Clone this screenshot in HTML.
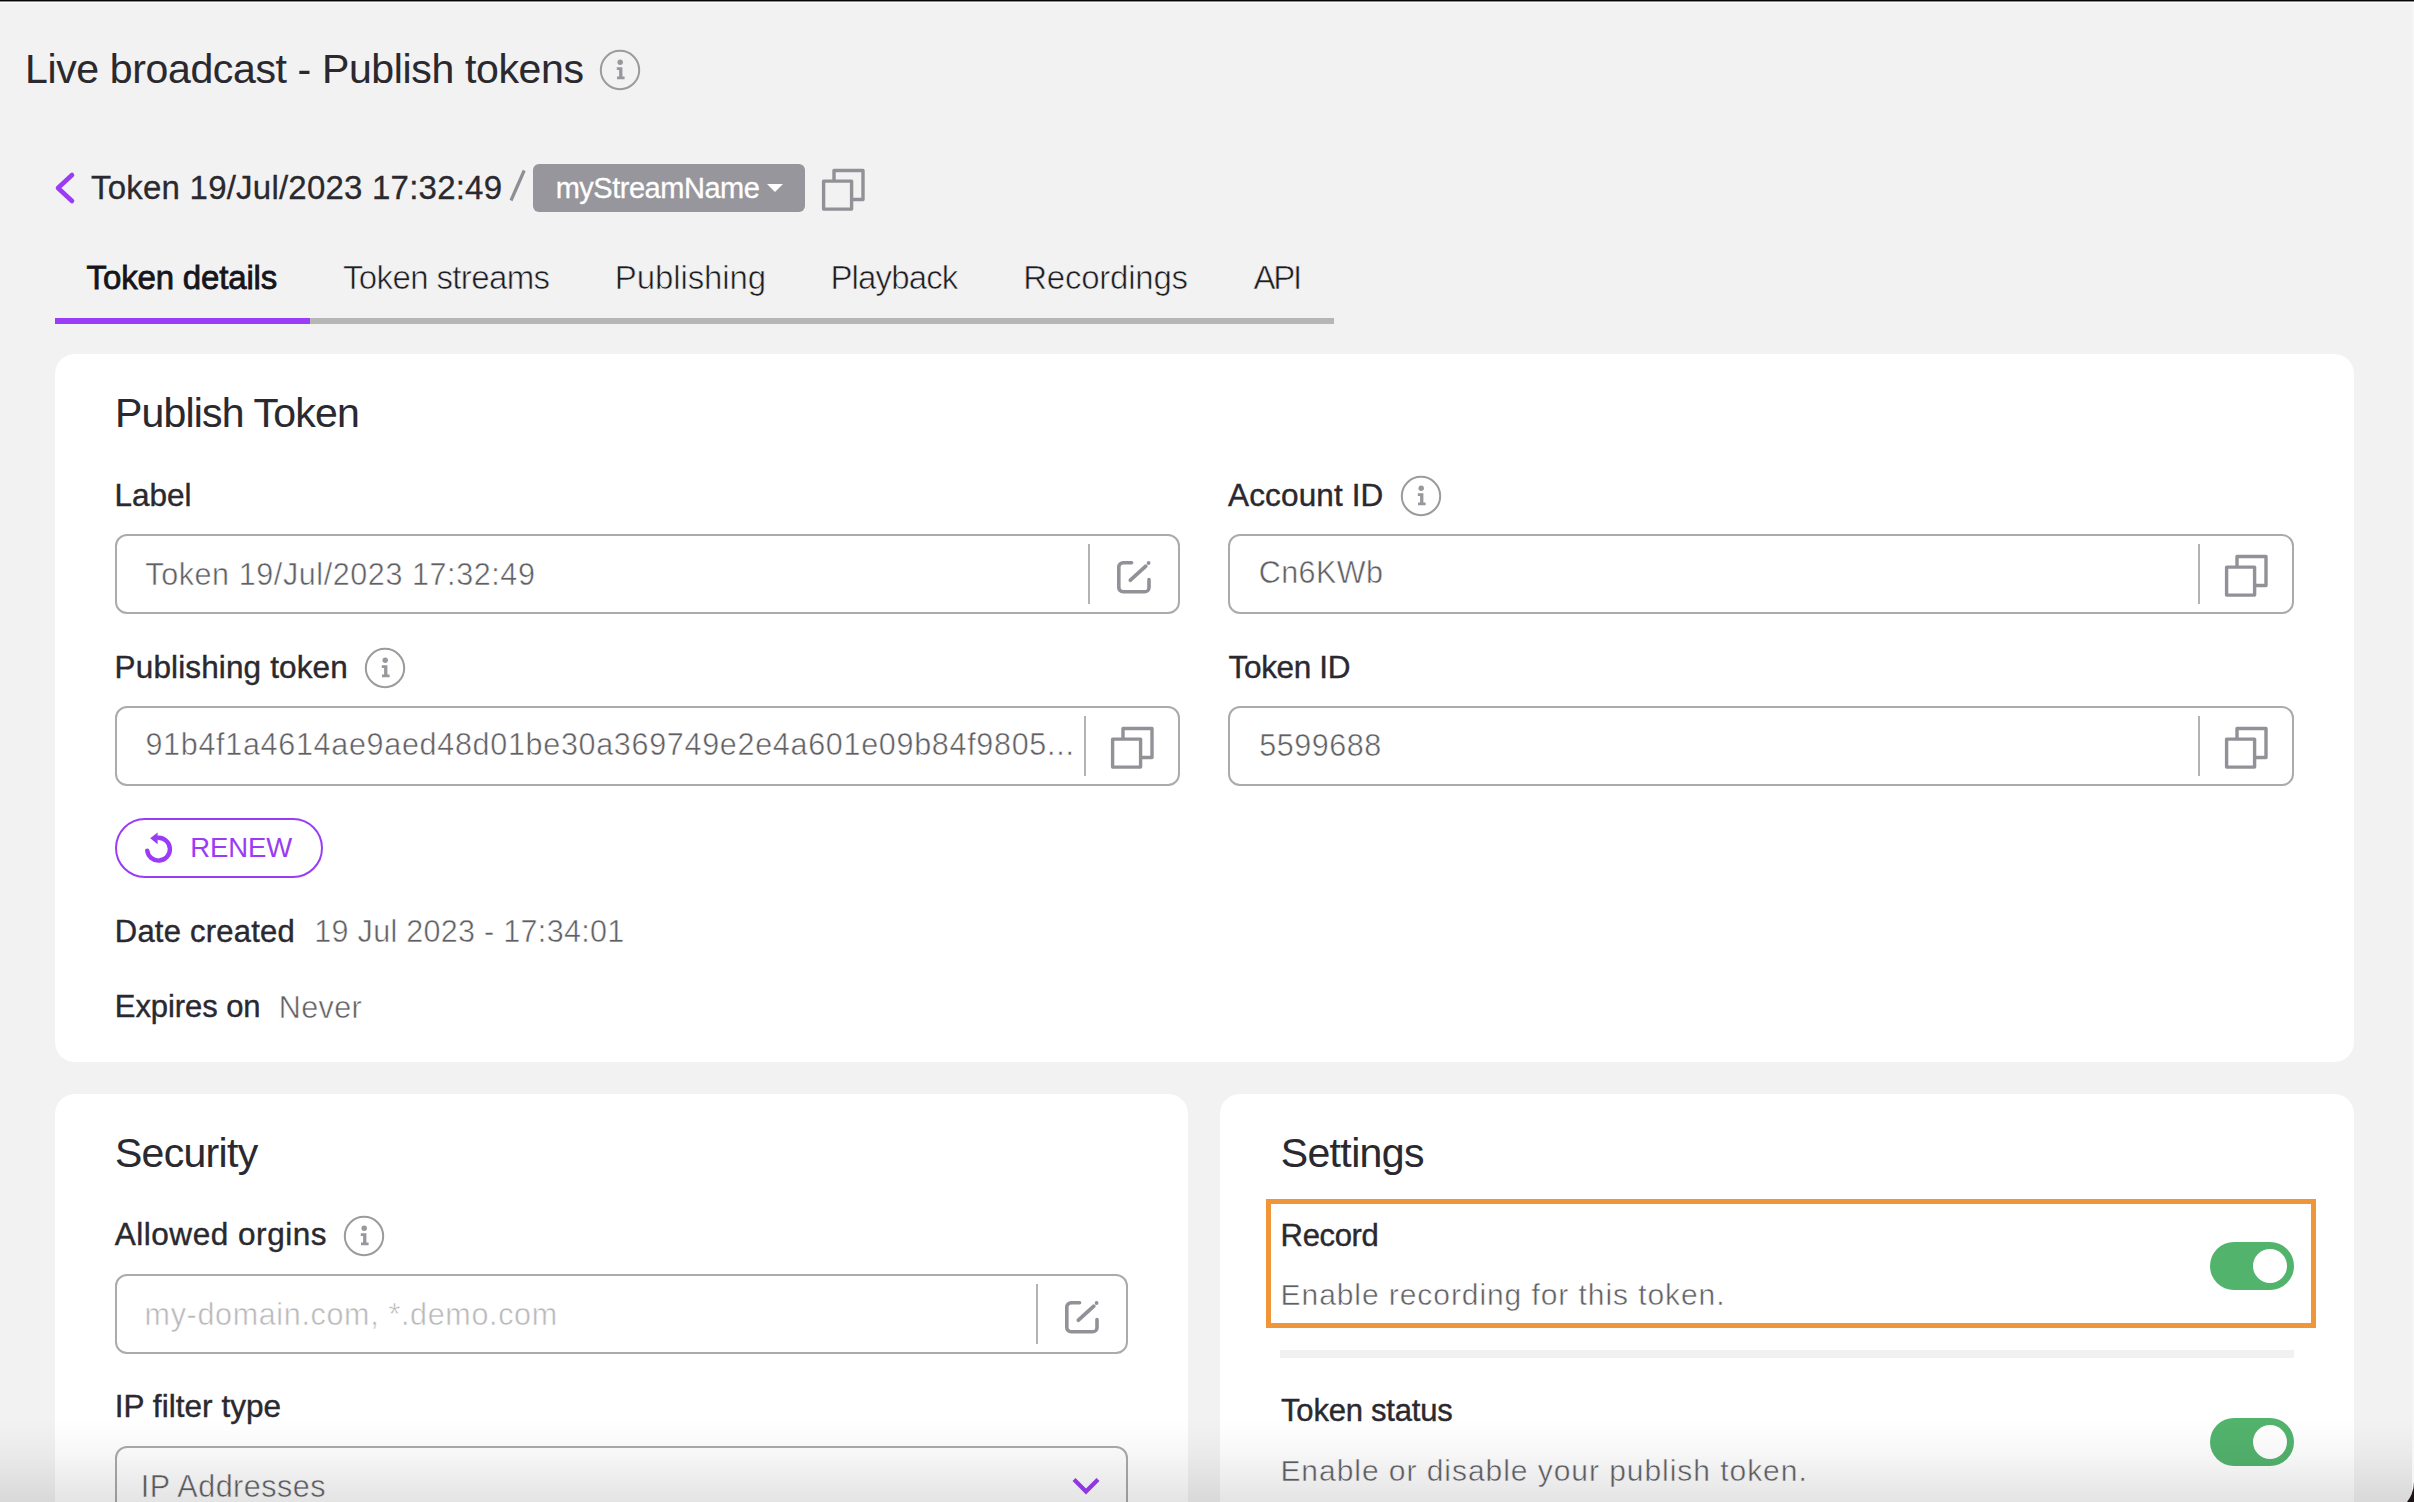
<!DOCTYPE html>
<html><head><meta charset="utf-8"><title>Live broadcast - Publish tokens</title>
<style>
html,body{margin:0;padding:0;}
body{width:2414px;height:1502px;overflow:hidden;position:relative;background:#f2f2f2;font-family:"Liberation Sans",sans-serif;}
.a{position:absolute;}
.t{position:absolute;white-space:nowrap;font-family:"Liberation Sans",sans-serif;}
.card{position:absolute;background:#fff;border-radius:20px;}
.inp{position:absolute;box-sizing:border-box;border:2px solid #aaaaaf;border-radius:12px;background:#fff;}
.sep{position:absolute;width:2px;background:#b2b2b7;}
svg{overflow:visible}
</style></head><body>
<div class="a" style="left:0;top:0;width:2414px;height:1px;background:#060508"></div>
<div class="a" style="left:0;top:1px;width:2414px;height:1px;background:#8a8a8c"></div>
<div class="a" style="left:0;top:2px;width:2414px;height:1px;background:#fdfdfd"></div>
<svg class="a" style="left:599px;top:49px" width="42" height="42" viewBox="0 0 42 42"><circle cx="21" cy="21" r="19.2" fill="none" stroke="#9b9b9b" stroke-width="2"/><circle cx="21.2" cy="13.3" r="2.7" fill="#98979c"/><path d="M17.8 18.2h5.6v9.2h2.2v2.8h-7.6v-2.8h2.1v-6.4h-2.3z" fill="#98979c"/></svg>
<svg class="a" style="left:50px;top:168px" width="30" height="40" viewBox="0 0 30 40"><path d="M22 7L8 20L22 33" fill="none" stroke="#9b3cf5" stroke-width="4.6" stroke-linecap="round" stroke-linejoin="round"/></svg>
<svg class="a" style="left:505px;top:165px" width="26" height="42" viewBox="0 0 26 42"><path d="M19.2 5.5L6 35.5" stroke="#8f8e94" stroke-width="3.2"/></svg>
<div class="a" style="left:533px;top:164px;width:272px;height:48px;background:#97969c;border-radius:6px"></div>
<div class="a" style="left:767px;top:184px;width:0;height:0;border-left:8px solid transparent;border-right:8px solid transparent;border-top:8.5px solid #fff"></div>
<svg class="a" style="left:822px;top:169px" width="44" height="44" viewBox="0 0 44 44"><path d="M12 11.5V1.5h29v29H31" fill="none" stroke="#929197" stroke-width="3.4" stroke-linejoin="round"/><rect x="1.6" y="12.1" width="28" height="28" fill="none" stroke="#929197" stroke-width="3.4" stroke-linejoin="round"/></svg>
<div class="a" style="left:55px;top:318px;width:1279px;height:6px;background:#b6b6b6"></div>
<div class="a" style="left:55px;top:318px;width:255px;height:6px;background:#9b3cf6"></div>
<div class="card" style="left:55px;top:354px;width:2299px;height:708px"></div>
<div class="card" style="left:55px;top:1094px;width:1133px;height:600px"></div>
<div class="card" style="left:1220px;top:1094px;width:1134px;height:600px"></div>
<svg class="a" style="left:1400px;top:475px" width="42" height="42" viewBox="0 0 42 42"><circle cx="21" cy="21" r="19.2" fill="none" stroke="#9b9b9b" stroke-width="2"/><circle cx="21.2" cy="13.3" r="2.7" fill="#98979c"/><path d="M17.8 18.2h5.6v9.2h2.2v2.8h-7.6v-2.8h2.1v-6.4h-2.3z" fill="#98979c"/></svg>
<div class="inp" style="left:115px;top:534px;width:1065px;height:80px"></div><div class="sep" style="left:1088px;top:544px;height:60px"></div>
<svg class="a" style="left:1116px;top:560px" width="36" height="34" viewBox="0 0 36 34"><path d="M15.6 2.8H7.2A4.4 4.4 0 0 0 2.8 7.2V27.4A4.4 4.4 0 0 0 7.2 31.8H28.6A4.4 4.4 0 0 0 33 27.4V19.6" fill="none" stroke="#929197" stroke-width="3.6" stroke-linecap="round"/><path d="M14.4 20.2L29.8 6.2" fill="none" stroke="#929197" stroke-width="3.8" stroke-linecap="round"/><circle cx="32.6" cy="3" r="1.9" fill="#929197"/></svg>
<div class="inp" style="left:1228px;top:534px;width:1066px;height:80px"></div><div class="sep" style="left:2198px;top:544px;height:60px"></div>
<svg class="a" style="left:2225px;top:555px" width="44" height="44" viewBox="0 0 44 44"><path d="M12 11.5V1.5h29v29H31" fill="none" stroke="#929197" stroke-width="3.4" stroke-linejoin="round"/><rect x="1.6" y="12.1" width="28" height="28" fill="none" stroke="#929197" stroke-width="3.4" stroke-linejoin="round"/></svg>
<svg class="a" style="left:364px;top:647px" width="42" height="42" viewBox="0 0 42 42"><circle cx="21" cy="21" r="19.2" fill="none" stroke="#9b9b9b" stroke-width="2"/><circle cx="21.2" cy="13.3" r="2.7" fill="#98979c"/><path d="M17.8 18.2h5.6v9.2h2.2v2.8h-7.6v-2.8h2.1v-6.4h-2.3z" fill="#98979c"/></svg>
<div class="inp" style="left:115px;top:706px;width:1065px;height:80px"></div><div class="sep" style="left:1084px;top:716px;height:60px"></div>
<svg class="a" style="left:1111px;top:727px" width="44" height="44" viewBox="0 0 44 44"><path d="M12 11.5V1.5h29v29H31" fill="none" stroke="#929197" stroke-width="3.4" stroke-linejoin="round"/><rect x="1.6" y="12.1" width="28" height="28" fill="none" stroke="#929197" stroke-width="3.4" stroke-linejoin="round"/></svg>
<div class="inp" style="left:1228px;top:706px;width:1066px;height:80px"></div><div class="sep" style="left:2198px;top:716px;height:60px"></div>
<svg class="a" style="left:2225px;top:727px" width="44" height="44" viewBox="0 0 44 44"><path d="M12 11.5V1.5h29v29H31" fill="none" stroke="#929197" stroke-width="3.4" stroke-linejoin="round"/><rect x="1.6" y="12.1" width="28" height="28" fill="none" stroke="#929197" stroke-width="3.4" stroke-linejoin="round"/></svg>
<div class="a" style="left:115px;top:818px;width:208px;height:60px;box-sizing:border-box;border:2px solid #9a3cf5;border-radius:30px"></div>
<svg class="a" style="left:140px;top:830px" width="36" height="36" viewBox="0 0 36 36"><path d="M7.2 20.6A11.4 11.4 0 1 0 18.6 7.8" fill="none" stroke="#9a3cf5" stroke-width="4.4" stroke-linecap="round"/><path d="M10.2 8.2L17.6 2.6V14.2Z" fill="#9a3cf5"/></svg>
<svg class="a" style="left:343px;top:1215px" width="42" height="42" viewBox="0 0 42 42"><circle cx="21" cy="21" r="19.2" fill="none" stroke="#9b9b9b" stroke-width="2"/><circle cx="21.2" cy="13.3" r="2.7" fill="#98979c"/><path d="M17.8 18.2h5.6v9.2h2.2v2.8h-7.6v-2.8h2.1v-6.4h-2.3z" fill="#98979c"/></svg>
<div class="inp" style="left:115px;top:1274px;width:1013px;height:80px"></div><div class="sep" style="left:1036px;top:1284px;height:60px"></div>
<svg class="a" style="left:1064px;top:1300px" width="36" height="34" viewBox="0 0 36 34"><path d="M15.6 2.8H7.2A4.4 4.4 0 0 0 2.8 7.2V27.4A4.4 4.4 0 0 0 7.2 31.8H28.6A4.4 4.4 0 0 0 33 27.4V19.6" fill="none" stroke="#929197" stroke-width="3.6" stroke-linecap="round"/><path d="M14.4 20.2L29.8 6.2" fill="none" stroke="#929197" stroke-width="3.8" stroke-linecap="round"/><circle cx="32.6" cy="3" r="1.9" fill="#929197"/></svg>
<div class="inp" style="left:115px;top:1446px;width:1013px;height:120px"></div>
<svg class="a" style="left:1066px;top:1472px" width="40" height="28" viewBox="0 0 40 28"><path d="M8 7.5L20 19.5L32 7.5" fill="none" stroke="#9a3cf5" stroke-width="4.2"/></svg>
<div class="a" style="left:1266px;top:1199px;width:1050px;height:129px;box-sizing:border-box;border:5px solid #ef9738"></div>
<div class="a" style="left:2210px;top:1242px;width:84px;height:48px;border-radius:24px;background:#52b36d"></div>
<div class="a" style="left:2253px;top:1249px;width:34px;height:34px;border-radius:17px;background:#fff"></div>
<div class="a" style="left:1280px;top:1350px;width:1014px;height:8px;background:#f1f1f1"></div>
<div class="a" style="left:2210px;top:1418px;width:84px;height:48px;border-radius:24px;background:#52b36d"></div>
<div class="a" style="left:2253px;top:1425px;width:34px;height:34px;border-radius:17px;background:#fff"></div>
<div class="t" style="left:25.00px;top:48.56px;font-size:41px;line-height:41px;color:#2a292f;letter-spacing:-0.362px;-webkit-text-stroke:0.1px #2a292f;">Live broadcast - Publish tokens</div>
<div class="t" style="left:91.00px;top:171.28px;font-size:33px;line-height:33px;color:#2a292f;letter-spacing:0.222px;-webkit-text-stroke:0.3px #2a292f;">Token 19/Jul/2023 17:32:49</div>
<div class="t" style="left:555.70px;top:173.64px;font-size:29px;line-height:29px;color:#ffffff;letter-spacing:-0.487px;-webkit-text-stroke:0.3px #ffffff;">myStreamName</div>
<div class="t" style="left:86.60px;top:260.78px;font-size:33px;line-height:33px;color:#16151b;letter-spacing:-0.160px;-webkit-text-stroke:0.8px #16151b;">Token details</div>
<div class="t" style="left:343.00px;top:260.78px;font-size:33px;line-height:33px;color:#1d1c21;letter-spacing:-0.632px;-webkit-text-stroke:0.6px #f2f2f2;">Token streams</div>
<div class="t" style="left:614.80px;top:260.78px;font-size:33px;line-height:33px;color:#1d1c21;letter-spacing:-0.102px;-webkit-text-stroke:0.6px #f2f2f2;">Publishing</div>
<div class="t" style="left:830.40px;top:260.78px;font-size:33px;line-height:33px;color:#1d1c21;letter-spacing:-0.857px;-webkit-text-stroke:0.6px #f2f2f2;">Playback</div>
<div class="t" style="left:1023.20px;top:260.78px;font-size:33px;line-height:33px;color:#1d1c21;letter-spacing:-0.224px;-webkit-text-stroke:0.6px #f2f2f2;">Recordings</div>
<div class="t" style="left:1253.40px;top:260.78px;font-size:33px;line-height:33px;color:#1d1c21;letter-spacing:-2.211px;-webkit-text-stroke:0.6px #f2f2f2;">API</div>
<div class="t" style="left:115.00px;top:392.56px;font-size:41px;line-height:41px;color:#2a292f;letter-spacing:-0.814px;-webkit-text-stroke:0.1px #2a292f;">Publish Token</div>
<div class="t" style="left:114.50px;top:479.54px;font-size:31.5px;line-height:31.5px;color:#2a292f;letter-spacing:-0.044px;-webkit-text-stroke:0.4px #2a292f;">Label</div>
<div class="t" style="left:1228.10px;top:479.54px;font-size:31.5px;line-height:31.5px;color:#2a292f;letter-spacing:0.131px;-webkit-text-stroke:0.4px #2a292f;">Account ID</div>
<div class="t" style="left:145.30px;top:558.58px;font-size:30.5px;line-height:30.5px;color:#606064;letter-spacing:0.592px;-webkit-text-stroke:0.5px #ffffff;">Token 19/Jul/2023 17:32:49</div>
<div class="t" style="left:1258.70px;top:557.38px;font-size:30.5px;line-height:30.5px;color:#606064;letter-spacing:0.424px;-webkit-text-stroke:0.5px #ffffff;">Cn6KWb</div>
<div class="t" style="left:114.60px;top:651.54px;font-size:31.5px;line-height:31.5px;color:#2a292f;letter-spacing:0.131px;-webkit-text-stroke:0.4px #2a292f;">Publishing token</div>
<div class="t" style="left:1228.60px;top:651.54px;font-size:31.5px;line-height:31.5px;color:#2a292f;letter-spacing:-0.351px;-webkit-text-stroke:0.4px #2a292f;">Token ID</div>
<div class="t" style="left:145.40px;top:729.38px;font-size:30.5px;line-height:30.5px;color:#606064;letter-spacing:0.703px;-webkit-text-stroke:0.5px #ffffff;">91b4f1a4614ae9aed48d01be30a369749e2e4a601e09b84f9805...</div>
<div class="t" style="left:1259.30px;top:729.68px;font-size:30.5px;line-height:30.5px;color:#606064;letter-spacing:0.537px;-webkit-text-stroke:0.5px #ffffff;">5599688</div>
<div class="t" style="left:190.20px;top:833.60px;font-size:27.5px;line-height:27.5px;color:#9a3cf4;letter-spacing:-0.101px;">RENEW</div>
<div class="t" style="left:114.80px;top:915.56px;font-size:31px;line-height:31px;color:#2a292f;letter-spacing:0.223px;-webkit-text-stroke:0.4px #2a292f;">Date created</div>
<div class="t" style="left:314.30px;top:915.88px;font-size:30.5px;line-height:30.5px;color:#606064;letter-spacing:0.301px;-webkit-text-stroke:0.5px #ffffff;">19 Jul 2023 - 17:34:01</div>
<div class="t" style="left:114.80px;top:991.36px;font-size:31px;line-height:31px;color:#2a292f;letter-spacing:-0.080px;-webkit-text-stroke:0.4px #2a292f;">Expires on</div>
<div class="t" style="left:278.80px;top:991.78px;font-size:30.5px;line-height:30.5px;color:#606064;letter-spacing:0.400px;-webkit-text-stroke:0.5px #ffffff;">Never</div>
<div class="t" style="left:114.90px;top:1132.56px;font-size:41px;line-height:41px;color:#2a292f;letter-spacing:-0.686px;-webkit-text-stroke:0.1px #2a292f;">Security</div>
<div class="t" style="left:1280.70px;top:1132.56px;font-size:41px;line-height:41px;color:#2a292f;letter-spacing:-0.621px;-webkit-text-stroke:0.1px #2a292f;">Settings</div>
<div class="t" style="left:114.70px;top:1219.04px;font-size:31.5px;line-height:31.5px;color:#2a292f;letter-spacing:0.538px;-webkit-text-stroke:0.4px #2a292f;">Allowed orgins</div>
<div class="t" style="left:144.60px;top:1298.58px;font-size:30.5px;line-height:30.5px;color:#b9b9bc;letter-spacing:0.662px;-webkit-text-stroke:0.5px #ffffff;">my-domain.com, *.demo.com</div>
<div class="t" style="left:114.80px;top:1390.84px;font-size:31.5px;line-height:31.5px;color:#2a292f;letter-spacing:0.039px;-webkit-text-stroke:0.4px #2a292f;">IP filter type</div>
<div class="t" style="left:140.80px;top:1470.98px;font-size:30.5px;line-height:30.5px;color:#606064;letter-spacing:0.496px;-webkit-text-stroke:0.5px #ffffff;">IP Addresses</div>
<div class="t" style="left:1280.60px;top:1219.96px;font-size:31px;line-height:31px;color:#2a292f;letter-spacing:-0.338px;-webkit-text-stroke:0.4px #2a292f;">Record</div>
<div class="t" style="left:1280.60px;top:1279.80px;font-size:30px;line-height:30px;color:#606064;letter-spacing:0.926px;-webkit-text-stroke:0.5px #ffffff;">Enable recording for this token.</div>
<div class="t" style="left:1281.10px;top:1395.46px;font-size:31px;line-height:31px;color:#2a292f;letter-spacing:-0.222px;-webkit-text-stroke:0.4px #2a292f;">Token status</div>
<div class="t" style="left:1280.40px;top:1456.00px;font-size:30px;line-height:30px;color:#606064;letter-spacing:0.954px;-webkit-text-stroke:0.5px #ffffff;">Enable or disable your publish token.</div>
<div class="a" style="left:0;top:1420px;width:2414px;height:82px;background:linear-gradient(to bottom,rgba(0,0,0,0),rgba(0,0,0,0.03) 40%,rgba(0,0,0,0.105));z-index:5"></div>
<div class="a" style="left:2412px;top:3px;width:2px;height:1499px;background:#f6f6f6;z-index:6"></div>
<div class="a" style="left:2350px;top:1482px;width:64px;height:20px;overflow:hidden;z-index:7"><div style="position:absolute;width:200px;height:200px;box-shadow:0 0 0 300px #1c1414;border-radius:0 0 32px 0;left:-136px;top:-168px"></div></div>
</body></html>
